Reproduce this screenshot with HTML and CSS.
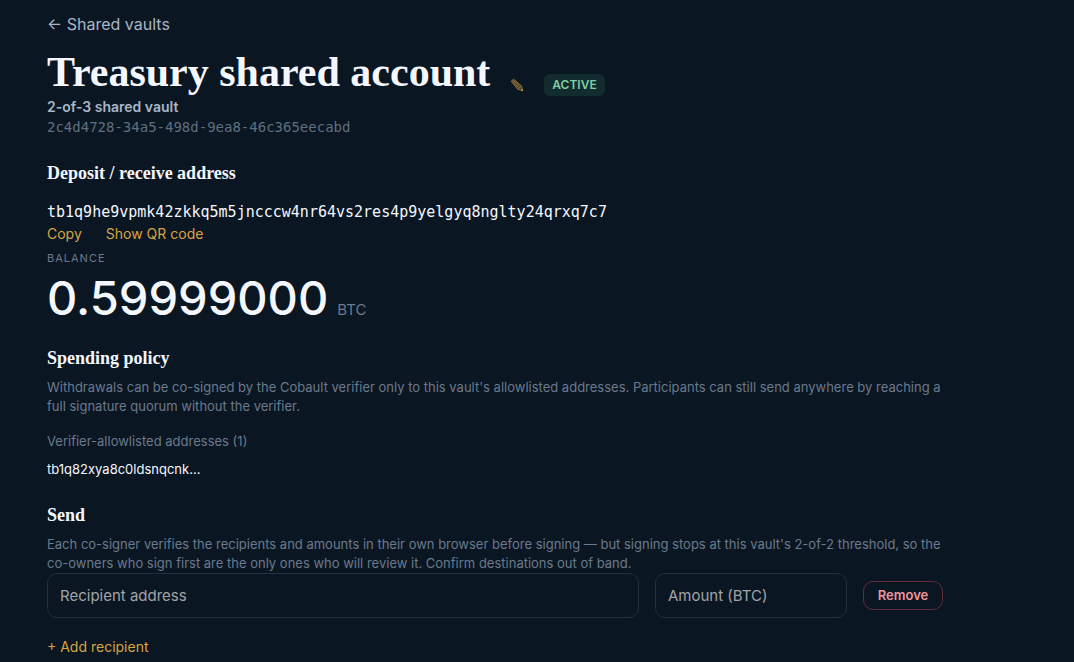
FILE: index.html
```html
<!DOCTYPE html>
<html lang="en">
<head>
<meta charset="utf-8">
<meta name="viewport" content="width=device-width, initial-scale=1">
<title>Treasury shared account</title>
<link rel="stylesheet" href="styles.css">
</head>
<body>
<main class="page">
  <nav class="crumb"><a class="back" href="#vaults">← Shared vaults</a></nav>

  <header class="vault-header">
    <div class="title-row">
      <h1 class="title">Treasury shared account</h1>
      <button class="edit" type="button" aria-label="Rename vault">
        <svg class="edit-icon" viewBox="0 0 14 14" aria-hidden="true">
          <path class="pencil-body" d="M1.2 3.2 3.6 1.2 11.4 7.8 12.7 12.8 7.6 11.2Z"/>
          <path class="pencil-lines" d="M2 2.5 8.9 10.2M2.8 1.9 10.3 8.9M2.6 4.9 5 2.4M4.4 7.2 7 4M6.1 9.4 9.2 6M7.6 11.2 11.4 7.8"/>
          <path class="pencil-tip" d="M10.8 12.2 12.3 10.9 12.9 13Z"/>
        </svg>
      </button>
      <span class="badge">ACTIVE</span>
    </div>
    <p class="kind">2-of-3 shared vault</p>
    <p class="vault-id">2c4d4728-34a5-498d-9ea8-46c365eecabd</p>
  </header>

  <section class="section">
    <h2 class="heading">Deposit / receive address</h2>
    <p class="address">tb1q9he9vpmk42zkkq5m5jncccw4nr64vs2res4p9yelgyq8nglty24qrxq7c7</p>
    <div class="actions">
      <button class="text-button" type="button">Copy</button>
      <button class="text-button" type="button">Show QR code</button>
    </div>
    <p class="label">BALANCE</p>
    <p class="balance"><span class="amount">0.59999000</span><span class="unit">BTC</span></p>
  </section>

  <section class="section">
    <h2 class="heading">Spending policy</h2>
    <p class="note">Withdrawals can be co-signed by the Cobault verifier only to this vault's allowlisted addresses. Participants can still send anywhere by reaching a full signature quorum without the verifier.</p>
    <p class="list-title">Verifier-allowlisted addresses (1)</p>
    <ul class="allowlist"><li>tb1q82xya8c0ldsnqcnk...</li></ul>
  </section>

  <section class="section">
    <h2 class="heading">Send</h2>
    <p class="note">Each co-signer verifies the recipients and amounts in their own browser before signing — but signing stops at this vault's 2-of-2 threshold, so the co-owners who sign first are the only ones who will review it. Confirm destinations out of band.</p>
    <form class="recipient">
      <input class="field field-address" type="text" placeholder="Recipient address" aria-label="Recipient address">
      <input class="field field-amount" type="text" placeholder="Amount (BTC)" aria-label="Amount (BTC)">
      <button class="remove" type="button">Remove</button>
    </form>
    <button class="text-button add" type="button">+ Add recipient</button>
  </section>
</main>
</body>
</html>
```
FILE: styles.css
```css
* { box-sizing: border-box; }

body {
  margin: 0;
  background: #0a1622;
  color: #f5f7ff;
  font-family: Inter, "Liberation Sans", sans-serif;
  font-size: 16px;
  line-height: 24px;
}

h1, h2, p, ul { margin: 0; padding: 0; }

button, input { font: inherit; }

button {
  padding: 0;
  border: 0;
  background: none;
  cursor: pointer;
}

.page {
  max-width: 991px;
  padding: 12px 48px 0 47px;
}

.back {
  color: #a9b6c6;
  text-decoration: none;
}

.vault-header { margin-top: 12px; }

.title-row {
  display: flex;
  align-items: flex-end;
}

.title {
  font-family: "Liberation Serif", serif;
  font-size: 42px;
  font-weight: 700;
  line-height: 49px;
}

.edit {
  display: flex;
  margin: 0 20px 5px 20px;
}

.edit-icon {
  width: 14px;
  height: 14px;
}

.pencil-body { fill: #4a3e2a; stroke: #a57c3d; stroke-width: 0.8; }
.pencil-lines { fill: none; stroke: #a57c3d; stroke-width: 0.5; }
.pencil-tip { fill: #e0aa50; }

.badge {
  margin-bottom: 1px;
  padding: 0 8px;
  border-radius: 6px;
  background: #112b2f;
  color: #7fcfa4;
  font-size: 12px;
  font-weight: 600;
  line-height: 22px;
}

.kind {
  color: #a9b6c6;
  font-size: 14px;
  font-weight: 600;
  line-height: 20px;
}

.vault-id {
  color: #5f6f80;
  font-family: "DejaVu Sans Mono", monospace;
  font-size: 14px;
  line-height: 20px;
}

.section { margin-top: 24px; }

.heading {
  font-family: "Liberation Serif", serif;
  font-size: 18px;
  font-weight: 700;
  line-height: 24px;
}

.address {
  margin-top: 15px;
  font-family: "DejaVu Sans Mono", monospace;
  font-size: 15px;
  line-height: 24px;
  overflow-wrap: anywhere;
}

.actions {
  display: flex;
  gap: 24px;
}

.text-button {
  color: #d9a441;
  font-size: 14px;
  line-height: 20px;
}

.label {
  margin-top: 6px;
  color: #6b7a8c;
  font-size: 11px;
  line-height: 16px;
  letter-spacing: 1px;
}

.balance {
  display: flex;
  align-items: baseline;
  gap: 9px;
  margin-top: 8px;
}

.amount {
  font-size: 47px;
  font-weight: 500;
  line-height: 48px;
}

.unit {
  color: #6b7a8c;
  font-size: 15px;
}

.note {
  margin-top: 8px;
  color: #6b7a8c;
  font-size: 13px;
  line-height: 19px;
}

.list-title {
  margin-top: 15px;
  color: #6b7a8c;
  font-size: 13px;
  line-height: 20px;
}

.allowlist {
  margin-top: 8px;
  font-size: 13px;
  line-height: 20px;
  list-style: none;
}

.recipient {
  display: flex;
  align-items: center;
  gap: 16px;
}

.field {
  min-width: 0;
  padding: 10px 12px;
  border: 1px solid #23303d;
  border-radius: 10px;
  background: transparent;
  color: #f5f7ff;
  font-size: 15px;
  line-height: 23px;
}

.field::placeholder { color: #a2a4a7; opacity: 1; }

.field-address { flex: 1; }
.field-amount { width: 192px; }

.remove {
  width: 80px;
  border: 1px solid #642c3b;
  border-radius: 10px;
  color: #ee949d;
  font-size: 13px;
  font-weight: 600;
  line-height: 27px;
}

.add { margin-top: 19px; }
```
